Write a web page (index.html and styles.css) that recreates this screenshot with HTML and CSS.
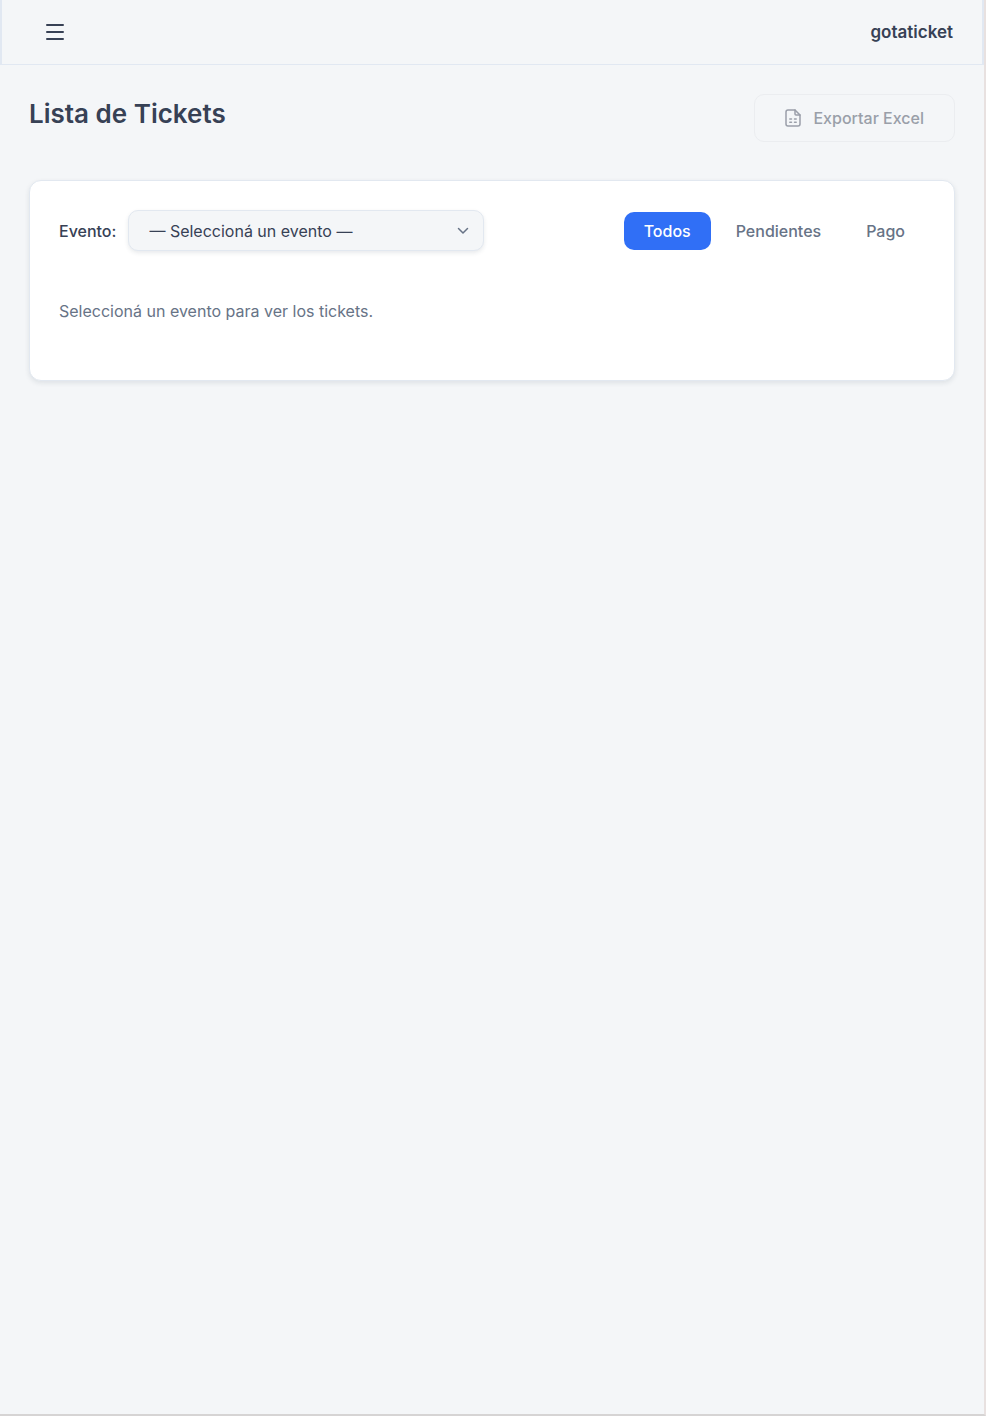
FILE: index.html
```html
<!DOCTYPE html>
<html lang="es">
<head>
    <meta charset="UTF-8">
    <meta name="viewport" content="width=device-width, initial-scale=1.0">
    <link rel="stylesheet" href="styles.css">
    <title>Lista de Tickets</title>
</head>
<body>

<header class="topbar">
    <button class="menu-button" type="button" aria-label="Menú">
        <svg width="20" height="18" viewBox="0 0 20 18" fill="none" stroke="currentColor" stroke-width="2" stroke-linecap="round">
            <path d="M2 2h16M2 9h16M2 16h16"/>
        </svg>
    </button>
    <a class="brand" href="#">gotaticket</a>
</header>

<main class="content">
    <div class="page-head">
        <h1>Lista de Tickets</h1>
        <button class="export-button" type="button" disabled>
            <svg width="16" height="18" viewBox="0 0 16 18" fill="none" stroke="currentColor" stroke-width="1.5" stroke-linecap="round" stroke-linejoin="round">
                <path d="M10 1H3a2 2 0 0 0-2 2v12a2 2 0 0 0 2 2h10a2 2 0 0 0 2-2V6z"/>
                <path d="M10 1v4a1 1 0 0 0 1 1h4"/>
                <path d="M4.800 10h1.700M9.500 10h1.700M4.800 13.200h1.700M9.500 13.200h1.700"/>
            </svg>
            Exportar Excel
        </button>
    </div>

    <section class="card">
        <div class="toolbar">
            <div class="event-field">
                <label for="evento">Evento:</label>
                <div class="select-wrap">
                    <select id="evento">
                        <option>— Seleccioná un evento —</option>
                    </select>
                    <svg class="chevron" width="12" height="8" viewBox="0 0 12 8" fill="none" stroke="currentColor" stroke-width="1.5" stroke-linecap="round" stroke-linejoin="round">
                        <path d="M1.500 1.500L6 6l4.500-4.500"/>
                    </svg>
                </div>
            </div>
            <div class="filters">
                <button class="filter active" type="button">Todos</button>
                <button class="filter" type="button">Pendientes</button>
                <button class="filter" type="button">Pago</button>
            </div>
        </div>
        <p class="empty">Seleccioná un evento para ver los tickets.</p>
    </section>
</main>

</body>
</html>
```
FILE: styles.css
```css
* {
    box-sizing: border-box;
}

body {
    margin: 0;
    min-height: 100vh;
    background-color: #f4f6f8;
    border-right: 2px solid #e8e1e0;
    border-bottom: 2px solid #d6d4d4;
    font-family: Inter, "Liberation Sans", sans-serif;
    font-size: 16px;
    line-height: 24px;
    color: #374155;
}

button,
select {
    font: inherit;
    color: inherit;
}

.topbar {
    display: flex;
    align-items: center;
    justify-content: space-between;
    height: 65px;
    padding: 0 29px 0 33px;
    border: 2px solid #e1e8f2;
    border-width: 0 2px 1px;
}

.menu-button {
    display: flex;
    padding: 10px;
    border: none;
    background: none;
    cursor: pointer;
}

.brand {
    font-size: 17px;
    font-weight: 600;
    color: inherit;
    text-decoration: none;
}

.content {
    padding: 29px;
}

.page-head {
    display: flex;
    align-items: flex-start;
    justify-content: space-between;
    margin-bottom: 38px;
}

h1 {
    margin: 0;
    font-size: 26px;
    line-height: 40px;
    font-weight: 600;
}

.export-button {
    display: flex;
    align-items: center;
    gap: 12px;
    height: 48px;
    padding: 0 30px;
    border: 1px solid #ebedf0;
    border-radius: 10px;
    background: none;
    font-weight: 500;
    color: #9a9fa9;
}

.card {
    padding: 29px;
    border: 1px solid #e2e8f0;
    border-radius: 12px;
    background-color: #fff;
    box-shadow: 0 2px 5px rgba(30, 50, 70, 0.1);
}

.toolbar {
    display: flex;
    align-items: center;
    justify-content: space-between;
}

.event-field {
    display: flex;
    align-items: center;
    gap: 12px;
}

.event-field label {
    font-weight: 500;
}

.select-wrap {
    position: relative;
}

.select-wrap select {
    appearance: none;
    width: 356px;
    height: 41px;
    padding: 0 40px 0 20px;
    border: 1px solid #e2e8f0;
    border-radius: 10px;
    background-color: #f4f6f8;
    box-shadow: 0 2px 4px rgba(30, 50, 70, 0.1);
}

.chevron {
    position: absolute;
    top: 17px;
    right: 15px;
    color: #677386;
    pointer-events: none;
}

.filters {
    display: flex;
    gap: 5px;
}

.filter {
    height: 38px;
    padding: 0 20px;
    border: none;
    border-radius: 10px;
    background: none;
    font-weight: 500;
    color: #677386;
    cursor: pointer;
}

.filter.active {
    background-color: #306ff6;
    color: #fff;
}

.empty {
    margin: 48px 0 28px;
    color: #677386;
}
```
